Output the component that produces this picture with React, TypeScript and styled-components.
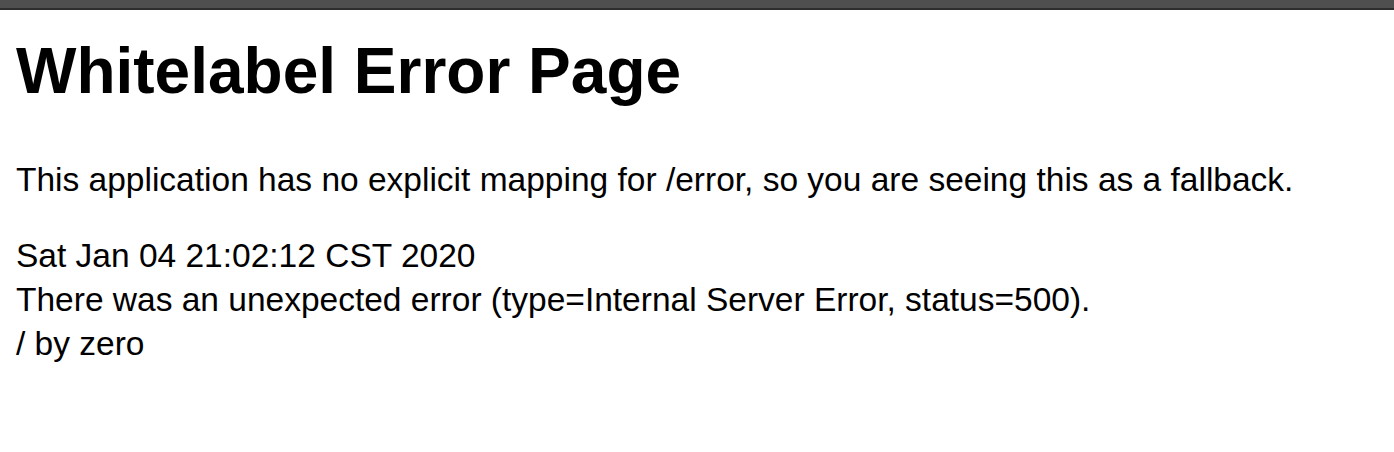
import React from 'react';
import { styled, createGlobalStyle } from 'styled-components';

const GlobalStyle = createGlobalStyle`
  html, body {
    margin: 0;
    padding: 0;
    background: #ffffff;
  }
  body {
    font-family: "Liberation Sans", Arial, sans-serif;
    color: #000000;
  }
`;

const TopBar = styled.div`
  height: 8px;
  background-color: #4f4f4f;
  border-bottom: 2px solid #2e2e2e;
`;

const Page = styled.main`
  padding: 24px 16px 0;
`;

const Title = styled.h1`
  margin: 0;
  font-size: 64px;
  line-height: 74px;
  font-weight: 700;
`;

const Message = styled.p`
  margin: 50px 0 0;
  font-size: 33.5px;
  line-height: 44px;
`;

const Details = styled.div`
  margin-top: 32px;
  font-size: 33.5px;
  line-height: 44px;
`;

export default function App() {
  return (
    <>
      <GlobalStyle />
      <TopBar />
      <Page>
        <Title>Whitelabel Error Page</Title>
        <Message>
          This application has no explicit mapping for /error, so you are seeing this as a fallback.
        </Message>
        <Details>
          <div>Sat Jan 04 21:02:12 CST 2020</div>
          <div>There was an unexpected error (type=Internal Server Error, status=500).</div>
          <div>/ by zero</div>
        </Details>
      </Page>
    </>
  );
}
